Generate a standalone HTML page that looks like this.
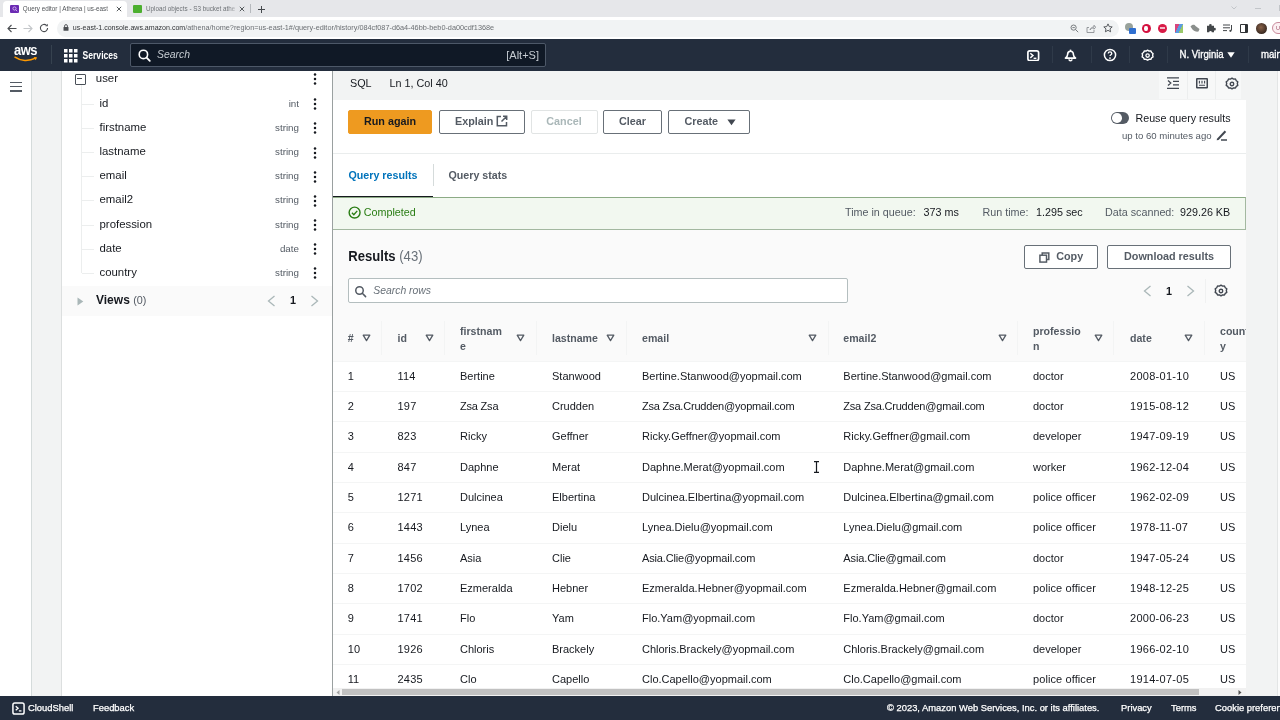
<!DOCTYPE html>
<html lang="en">
<head>
<meta charset="utf-8">
<title>Query editor | Athena | us-east-1</title>
<style>
*{box-sizing:border-box;margin:0;padding:0}
html,body{width:1280px;height:720px;overflow:hidden;background:#f2f3f3;font-family:"Liberation Sans",sans-serif;color:#16191f}
#root{position:relative;width:1280px;height:720px;overflow:hidden;will-change:transform}
#root div,#root span,#root svg,#root i{position:absolute;white-space:nowrap}
#root i{font-style:normal}
/* browser chrome */
#tabbar{left:0;top:0;width:1280px;height:17px;background:#e6e7ea}
#tab1{left:3px;top:0.500px;width:124px;height:16.500px;background:#fff;border-radius:4px 4px 0 0}
.tabtxt{font-size:6.300px;color:#6e7276;top:5px;line-height:8px}
#addr{left:0;top:17px;width:1280px;height:22px;background:#fff}
#url{left:57px;top:2.500px;width:1062px;height:17px;background:#f1f3f4;border-radius:8.500px}
#urltxt{left:15.800px;top:4.500px;font-size:7.310px;line-height:8px;color:#6b6f73}
/* aws nav */
#nav{left:0;top:39.400px;width:1280px;height:31.200px;background:#232d3d;z-index:5}
#search{left:130px;top:4px;width:416px;height:24px;background:#101926;border:1px solid #4d5868;border-radius:2px}
.navtxt{color:#fff;font-size:11px;line-height:14px}
/* left */
#leftstrip{left:0;top:70px;width:32px;height:626px;background:#fff;border-right:1px solid #d5dbdb}
#sidepanel{left:61px;top:70px;width:271px;border-left:1px solid #dcdfdf;height:626px;background:#fff}
#views{left:0;top:215.500px;width:270px;height:30px;background:#fafafa}
.col{font-size:11.4px;line-height:14px;color:#16191f;left:37.5px}
.typ{font-size:9.8px;line-height:12px;color:#545b64;right:33px}
.dots{left:250.900px}
.dots i{left:0;width:2.2px;height:2.2px;background:#16191f;border-radius:1.1px}
.tick{left:20px;width:11.5px;height:1px;background:#eceeee}
#vline{left:18.5px;top:15px;width:1px;height:188px;background:#eceeee}
.minus{left:12.800px;width:11px;height:11px;border:1.700px solid #4a5058;border-radius:1px}
.minus i{left:1.700px;top:3px;width:4.200px;height:1.600px;background:#4a5058}
/* main */
#main{left:332px;top:70px;width:914px;height:626px;background:#fff;border-left:1px solid #9aa0a0}
#edstat{left:0;top:0;width:913px;height:29.5px;background:#f2f3f3}
.btn{height:24px;top:40px;border:1px solid #687078;border-radius:2px;font-size:10.800px;font-weight:bold;color:#545b64;line-height:21px;text-align:center;background:#fff}
#results{left:0;top:159px;width:913px;height:467px;background:#fafafa;overflow:hidden}
.th{font-size:10.600px;font-weight:bold;color:#545b64;line-height:16px}
.td{font-size:11px;color:#16191f;line-height:14px;top:7px}
.row{left:0;width:913px;height:30.400px;background:#fff;border-top:1px solid #f4f5f5}
.cdiv{top:92px;width:1px;height:34px;background:#f3f4f4}
.g{color:#545b64}
/* footer */
#footer{left:0;top:696px;width:1280px;height:24px;background:#232d3d}
.ftxt{color:#fff;font-size:9.400px;line-height:12px;top:6px;-webkit-text-stroke:0.250px #fff}
.nsep{top:7px;width:1px;height:17px;background:#2f3a49}
.hb{left:10px;width:11.500px;height:1.600px;background:#545b64}
#rstrip{left:1276.500px;top:70px;width:4px;height:626px;background:#fbfbfb;border-left:1px solid #e3e5e5}

</style>
</head>
<body>
<div id="root">

<!-- BROWSER -->
<div id="tabbar">
  <div id="tab1"></div>
  <div style="left:10px;top:4.700px;width:8.500px;height:8.200px;background:#6b2bb3;border-radius:1px"></div>
  <svg style="left:11.500px;top:6px" width="6" height="6" viewBox="0 0 6 6"><circle cx="2.500" cy="2.500" r="1.600" fill="none" stroke="#d9b8f5" stroke-width=".9"/><path d="M3.700 3.700l1.500 1.500" stroke="#d9b8f5" stroke-width=".9"/></svg>
  <span class="tabtxt" style="left:22.800px;color:#505458">Query editor | Athena | us-east</span>
  <div style="left:106px;top:2px;width:9px;height:14px;background:linear-gradient(90deg,rgba(255,255,255,0),#fff)"></div>
  <svg style="left:116px;top:6px" width="6" height="6" viewBox="0 0 6 6"><path d="M.8.800l4.400 4.400M5.200.800L.8 5.200" stroke="#45494d" stroke-width=".9"/></svg>
  <div style="left:133px;top:4.700px;width:8.500px;height:8.200px;background:#4caf2f;border-radius:1px"></div>
  <span class="tabtxt" style="left:146px">Upload objects - S3 bucket athe</span>
  <div style="left:229px;top:2px;width:9px;height:14px;background:linear-gradient(90deg,rgba(230,231,234,0),#e6e7ea)"></div>
  <svg style="left:239px;top:6px" width="6" height="6" viewBox="0 0 6 6"><path d="M.8.800l4.400 4.400M5.200.800L.8 5.200" stroke="#45494d" stroke-width=".9"/></svg>
  <div style="left:250px;top:4px;width:1px;height:9px;background:#b6b9bd"></div>
  <svg style="left:258px;top:5.500px" width="7" height="7" viewBox="0 0 7 7"><path d="M3.500 0v7M0 3.500h7" stroke="#45494d" stroke-width="1"/></svg>
  <svg style="left:1230.500px;top:5.500px" width="6" height="4" viewBox="0 0 6 4"><path d="M.5.500L3 3 5.500.5" fill="none" stroke="#c2c5c9" stroke-width="1"/></svg>
  <div style="left:1254.500px;top:7.500px;width:6px;height:1px;background:#c2c5c9"></div>
  <div style="left:1278.500px;top:5px;width:6px;height:6px;border:1px solid #c2c5c9"></div>
</div>
<div id="addr">
  <svg style="left:6.500px;top:6.500px" width="10" height="9" viewBox="0 0 10 9" fill="none" stroke="#4a4d51" stroke-width="1.100"><path d="M9.500 4.500H1M4.500 1L1 4.500 4.500 8"/></svg>
  <svg style="left:23px;top:6.500px" width="10" height="9" viewBox="0 0 10 9" fill="none" stroke="#c4c7ca" stroke-width="1.100"><path d="M.5 4.500H9M5.500 1L9 4.500 5.500 8"/></svg>
  <svg style="left:39px;top:6px" width="10" height="10" viewBox="0 0 10 10" fill="none" stroke="#4a4d51" stroke-width="1.100"><path d="M8.600 5A3.600 3.600 0 1 1 7.500 2.400"/><path d="M8.800.800v2.400H6.400z" fill="#4a4d51" stroke="none"/></svg>
  <div id="url">
    <svg style="left:6px;top:4.500px" width="6" height="7" viewBox="0 0 6 7"><rect x=".5" y="3" width="5" height="3.800" rx=".5" fill="#4a4d51"/><path d="M1.600 3V2a1.400 1.400 0 0 1 2.800 0v1" fill="none" stroke="#4a4d51" stroke-width=".9"/></svg>
    <span id="urltxt"><i style="position:static;color:#303336;font-size:7.050px">us-east-1.console.aws.amazon.com</i>/athena/home?region=us-east-1#/query-editor/history/084cf087-d6a4-46bb-beb0-da00cdf1368e</span>
    <svg style="left:1013px;top:4px" width="9" height="9" viewBox="0 0 9 9" fill="none" stroke="#6b6f73" stroke-width=".9"><circle cx="3.600" cy="3.600" r="2.600"/><path d="M5.600 5.600l2.600 2.600M2.400 3.600h2.400"/></svg>
    <svg style="left:1029px;top:4px" width="10" height="9" viewBox="0 0 10 9" fill="none" stroke="#8c9094" stroke-width=".9"><path d="M3 3.500H1v5h7V6M4 6c.4-2 2-3 4-3V1.200L9.700 3.200 8 5.200V4C6 4 5 4.600 4 6z"/></svg>
    <svg style="left:1046px;top:3.500px" width="10" height="10" viewBox="0 0 10 10" fill="none" stroke="#4a4d51" stroke-width=".9"><path d="M5 .9l1.250 2.700 2.950.3-2.200 2 .6 2.900L5 7.300 2.400 8.800l.6-2.900-2.200-2 2.950-.3z" stroke-linejoin="round"/></svg>
  </div>
  <div style="left:1125px;top:6px;width:8px;height:8px;border-radius:50%;background:#9aa39c"></div>
  <div style="left:1129px;top:10.500px;width:6.500px;height:6.500px;background:#2f6fd0;border-radius:1px"></div>
  <div style="left:1141.500px;top:6.500px;width:9px;height:9px;border-radius:50%;background:#d4103f"></div>
  <div style="left:1144.200px;top:8.500px;width:3.600px;height:5px;border-radius:45%;background:#fff"></div>
  <div style="left:1158px;top:6.500px;width:9px;height:9px;border-radius:50%;background:#d81b47"></div>
  <div style="left:1160px;top:10px;width:5px;height:2px;background:#f4b8c6"></div>
  <div style="left:1174.500px;top:6.500px;width:8.500px;height:9px;background:linear-gradient(115deg,#d8467f 0 35%,#5b9be0 35% 65%,#9ac86a 65%)"></div>
  <svg style="left:1190px;top:7px" width="10" height="8" viewBox="0 0 10 8"><path d="M.5 2.500c1.500-2 4-2.500 5-.5l4 3-1 2.500c-2 .5-5-.5-6-2z" fill="#8b8f8c"/></svg>
  <svg style="left:1206px;top:6px" width="10" height="10" viewBox="0 0 10 10"><path d="M1 3.500h2.200a1.300 1.300 0 1 1 2.400 0H8v2.300a1.300 1.300 0 1 1 0 2.400V10H5.800a1.300 1.300 0 1 0-2.600 0H1z" transform="translate(0 -.8)" fill="#43474a"/></svg>
  <svg style="left:1222.500px;top:7px" width="10" height="9" viewBox="0 0 10 9" fill="none" stroke="#43474a" stroke-width="1"><path d="M0 1h7M0 3.800h7M0 6.600h4M8.500 1v5.500"/><circle cx="7.400" cy="6.800" r="1.100" fill="#43474a" stroke="none"/></svg>
  <div style="left:1240px;top:7px;width:8px;height:8.500px;border:1.200px solid #303336;border-right-width:3px;border-radius:1px"></div>
  <div style="left:1255.500px;top:5.500px;width:11px;height:11px;border-radius:50%;background:radial-gradient(circle at 45% 40%,#8a6248,#3a2a22 70%)"></div>
  <div style="left:1271.500px;top:5px;width:14px;height:12px;border-radius:6px;border:1px solid #c98b9c;background:#fbeff2"></div>
  <span style="left:1276px;top:8px;font-size:5.500px;line-height:6px;color:#a05068">U</span>
</div>

<!-- AWS NAV -->
<div id="nav">
  <span class="navtxt" style="left:14px;top:3.500px;font-size:13px;line-height:16px;font-weight:bold;letter-spacing:-0.500px;transform-origin:0 60%;transform:scaleY(1.150)">aws</span>
  <svg style="left:14px;top:17px" width="25" height="7" viewBox="0 0 25 7"><path d="M1 1.2C6.5 5.2 15 5.4 21.6 2.2" fill="none" stroke="#f90" stroke-width="1.5" stroke-linecap="round"/><path d="M19.6 1l3.4.2-1.3 3z" fill="#f90"/></svg>
  <div style="left:51px;top:6px;width:1px;height:19px;background:#36424f"></div>
  <svg style="left:63.5px;top:9.5px" width="14" height="14" viewBox="0 0 14 14" fill="#fff"><rect x="0" y="0" width="3.5" height="3.5"/><rect x="5" y="0" width="3.5" height="3.5"/><rect x="10" y="0" width="3.5" height="3.5"/><rect x="0" y="5" width="3.5" height="3.5"/><rect x="5" y="5" width="3.5" height="3.5"/><rect x="10" y="5" width="3.5" height="3.5"/><rect x="0" y="10" width="3.5" height="3.5"/><rect x="5" y="10" width="3.5" height="3.5"/><rect x="10" y="10" width="3.5" height="3.5"/></svg>
  <span class="navtxt" style="left:82.5px;top:9px;font-weight:bold;font-size:8.6px;line-height:14px;transform-origin:0 50%;transform:scaleY(1.2)">Services</span>
  <div id="search">
    <svg style="left:6px;top:4px" width="15" height="15" viewBox="0 0 15 15"><circle cx="6.4" cy="6.4" r="4.2" fill="none" stroke="#fff" stroke-width="1.6"/><path d="M9.6 9.6l3.2 3.2" stroke="#fff" stroke-width="1.8" stroke-linecap="round"/></svg>
    <span class="navtxt" style="left:26px;top:4px;color:#c6ccd2;font-style:italic;font-size:10.400px">Search</span>
    <span class="navtxt" style="right:6px;top:4px;color:#c6ccd2;font-size:11px">[Alt+S]</span>
  </div>
  <svg style="left:1027.200px;top:10.300px" width="12.500" height="11.500" viewBox="0 0 12.500 11.500"><rect x=".9" y=".9" width="10.700" height="9.700" rx="1.800" fill="none" stroke="#fff" stroke-width="1.700"/><path d="M3.300 3.300l2.700 2.300-2.700 2.300" fill="none" stroke="#fff" stroke-width="1.400"/><path d="M6.600 8.300h2.800" stroke="#fff" stroke-width="1.400"/></svg>
  <div class="nsep" style="left:1052px"></div>
  <svg style="left:1064.200px;top:9.500px" width="13" height="13" viewBox="0 0 13 13"><path d="M6.500 2.300c-2 0-2.900 1.500-2.900 3.300 0 1.600-.8 2.500-2.200 3.500h10.200c-1.400-1-2.200-1.900-2.200-3.500 0-1.800-.9-3.300-2.900-3.300z" fill="none" stroke="#fff" stroke-width="1.600" stroke-linejoin="round"/><path d="M6.500.600v1.400" stroke="#fff" stroke-width="1.500"/><path d="M5 10.300a1.500 1.500 0 0 0 3 0" fill="none" stroke="#fff" stroke-width="1.400"/></svg>
  <div class="nsep" style="left:1090.5px"></div>
  <svg style="left:1103.200px;top:8.600px" width="14" height="14" viewBox="0 0 15 15"><circle cx="7.500" cy="7.500" r="6" fill="none" stroke="#fff" stroke-width="1.600"/><path d="M5.600 6c0-1.200.9-1.900 1.900-1.900s1.900.7 1.900 1.700c0 1.400-1.900 1.400-1.900 2.900" fill="none" stroke="#fff" stroke-width="1.400"/><circle cx="7.500" cy="10.800" r=".95" fill="#fff"/></svg>
  <div class="nsep" style="left:1129px"></div>
  <svg style="left:1141.200px;top:9.600px" width="13.200" height="13.200" viewBox="0 0 15 15"><path d="M7.500 1.300l1.700 1 2-.1.900 1.800 1.600 1.100-.5 1.900.5 1.900-1.600 1.100-.9 1.800-2-.1-1.700 1-1.700-1-2 .1-.9-1.800L1.300 8.900l.5-1.900-.5-1.900 1.600-1.100.9-1.800 2 .1z" fill="none" stroke="#fff" stroke-width="1.600" stroke-linejoin="round"/><circle cx="7.500" cy="7.500" r="1.900" fill="none" stroke="#fff" stroke-width="1.500"/></svg>
  <div class="nsep" style="left:1166.500px"></div>
  <span class="navtxt" style="left:1179.500px;top:9px;font-size:9.650px;-webkit-text-stroke:0.300px #fff;transform-origin:0 50%;transform:scaleY(1.080)">N. Virginia</span>
  <svg style="left:1227px;top:13px" width="8" height="6" viewBox="0 0 8 6"><path d="M.3.300h7.400L4 5.700z" fill="#fff"/></svg>
  <div class="nsep" style="left:1248px"></div>
  <span class="navtxt" style="left:1261px;top:9px;font-size:9.650px;-webkit-text-stroke:0.300px #fff;transform-origin:0 50%;transform:scaleY(1.080)">main</span>
</div>

<!-- LEFT -->
<div id="leftstrip">
  <div class="hb" style="top:11.500px"></div><div class="hb" style="top:15.800px"></div><div class="hb" style="top:20.200px"></div>
</div>
<div id="sidepanel">
  <div id="views">
    <svg style="left:15px;top:11px" width="7" height="9" viewBox="0 0 7 9"><path d="M.5.600l5.800 3.900L.5 8.400z" fill="#aab7b8"/></svg>
    <span style="left:34px;top:7px;font-size:12px;font-weight:bold;line-height:15px;color:#16191f">Views <span style="position:static;font-weight:normal;color:#545b64;font-size:10.800px">(0)</span></span>
    <svg style="left:205px;top:9.500px" width="9" height="12" viewBox="0 0 9 12"><path d="M7.500 1L1.500 6l6 5" fill="none" stroke="#aab7b8" stroke-width="1.300"/></svg>
    <span style="left:228px;top:7.500px;font-size:10.800px;font-weight:bold;line-height:15px">1</span>
    <svg style="left:248px;top:9.500px" width="9" height="12" viewBox="0 0 9 12"><path d="M1.500 1l6 5-6 5" fill="none" stroke="#aab7b8" stroke-width="1.300"/></svg>
  </div>
  <div id="vline"></div>
  <div class="minus" style="top:3.6px"><i></i></div>
  <span class="col" style="left:33.8px;top:1.4px">user</span>
  <svg class="dots" style="top:3.4px" width="4" height="12" viewBox="0 0 4 12" fill="#16191f"><circle cx="2" cy="1.6" r="1.25"/><circle cx="2" cy="6" r="1.25"/><circle cx="2" cy="10.4" r="1.25"/></svg>
  <div class="tick" style="top:33.6px"></div>
  <span class="col" style="top:25.6px">id</span>
  <span class="typ" style="top:27.6px">int</span>
  <svg class="dots" style="top:28.1px" width="4" height="12" viewBox="0 0 4 12" fill="#16191f"><circle cx="2" cy="1.6" r="1.25"/><circle cx="2" cy="6" r="1.25"/><circle cx="2" cy="10.4" r="1.25"/></svg>
  <div class="tick" style="top:57.8px"></div>
  <span class="col" style="top:49.8px">firstname</span>
  <span class="typ" style="top:51.8px">string</span>
  <svg class="dots" style="top:52.3px" width="4" height="12" viewBox="0 0 4 12" fill="#16191f"><circle cx="2" cy="1.6" r="1.25"/><circle cx="2" cy="6" r="1.25"/><circle cx="2" cy="10.4" r="1.25"/></svg>
  <div class="tick" style="top:82.0px"></div>
  <span class="col" style="top:74.0px">lastname</span>
  <span class="typ" style="top:76.0px">string</span>
  <svg class="dots" style="top:76.5px" width="4" height="12" viewBox="0 0 4 12" fill="#16191f"><circle cx="2" cy="1.6" r="1.25"/><circle cx="2" cy="6" r="1.25"/><circle cx="2" cy="10.4" r="1.25"/></svg>
  <div class="tick" style="top:106.1px"></div>
  <span class="col" style="top:98.1px">email</span>
  <span class="typ" style="top:100.1px">string</span>
  <svg class="dots" style="top:100.6px" width="4" height="12" viewBox="0 0 4 12" fill="#16191f"><circle cx="2" cy="1.6" r="1.25"/><circle cx="2" cy="6" r="1.25"/><circle cx="2" cy="10.4" r="1.25"/></svg>
  <div class="tick" style="top:130.3px"></div>
  <span class="col" style="top:122.3px">email2</span>
  <span class="typ" style="top:124.3px">string</span>
  <svg class="dots" style="top:124.8px" width="4" height="12" viewBox="0 0 4 12" fill="#16191f"><circle cx="2" cy="1.6" r="1.25"/><circle cx="2" cy="6" r="1.25"/><circle cx="2" cy="10.4" r="1.25"/></svg>
  <div class="tick" style="top:154.5px"></div>
  <span class="col" style="top:146.5px">profession</span>
  <span class="typ" style="top:148.5px">string</span>
  <svg class="dots" style="top:149.0px" width="4" height="12" viewBox="0 0 4 12" fill="#16191f"><circle cx="2" cy="1.6" r="1.25"/><circle cx="2" cy="6" r="1.25"/><circle cx="2" cy="10.4" r="1.25"/></svg>
  <div class="tick" style="top:178.6px"></div>
  <span class="col" style="top:170.6px">date</span>
  <span class="typ" style="top:172.6px">date</span>
  <svg class="dots" style="top:173.1px" width="4" height="12" viewBox="0 0 4 12" fill="#16191f"><circle cx="2" cy="1.6" r="1.25"/><circle cx="2" cy="6" r="1.25"/><circle cx="2" cy="10.4" r="1.25"/></svg>
  <div class="tick" style="top:202.8px"></div>
  <span class="col" style="top:194.8px">country</span>
  <span class="typ" style="top:196.8px">string</span>
  <svg class="dots" style="top:197.3px" width="4" height="12" viewBox="0 0 4 12" fill="#16191f"><circle cx="2" cy="1.6" r="1.25"/><circle cx="2" cy="6" r="1.25"/><circle cx="2" cy="10.4" r="1.25"/></svg>
</div>

<div id="rstrip"></div>
<!-- MAIN -->
<div id="main">
  <div id="edstat">
    <span style="left:17px;top:7px;font-size:10.8px;line-height:13px;color:#16191f">SQL</span>
    <span style="left:56.5px;top:7px;font-size:10.8px;line-height:13px;color:#16191f">Ln 1, Col 40</span>
    <div style="left:825.500px;top:0;width:82px;height:29px;background:#f7f8f8"></div>
    <div style="left:853.5px;top:0;width:1px;height:29px;background:#eceeee"></div>
    <div style="left:882px;top:0;width:1px;height:29px;background:#eceeee"></div>
    <svg style="left:833.800px;top:7.400px" width="12.500" height="12.200" viewBox="0 0 12.500 12.200" fill="none" stroke="#414750" stroke-width="1.300"><path d="M0 .8h12.500M6 4.300h6.500M6 7.800h6.500M0 11.400h12.500M1 3.600L3.800 6.100 1 8.600"/></svg>
    <svg style="left:863.300px;top:8.200px" width="12" height="10.600" viewBox="0 0 12 10.600" fill="none" stroke="#414750"><rect x=".75" y=".75" width="10.500" height="9.100" rx=".3" stroke-width="1.500"/><path d="M3.400 2.800v2.600M6 2.800v2.600M8.600 2.800v2.600M3 7.300h6" stroke-width="1.100"/></svg>
    <svg style="left:891.500px;top:6.500px" width="14" height="14" viewBox="0 0 15 15"><path d="M7.500 1.300l1.700 1 2-.1.900 1.800 1.600 1.100-.5 1.900.5 1.900-1.600 1.100-.9 1.800-2-.1-1.700 1-1.700-1-2 .1-.9-1.800L1.300 8.900l.5-1.900-.5-1.900 1.600-1.100.9-1.800 2 .1z" fill="none" stroke="#414750" stroke-width="1.500" stroke-linejoin="round"/><circle cx="7.500" cy="7.500" r="1.900" fill="none" stroke="#414750" stroke-width="1.400"/></svg>
  </div>
  <div class="btn" style="left:15.0px;top:39.700px;width:84px;background:#ee9a20;border-color:#ee9a20;color:#16191f">Run again</div>
  <div class="btn" style="left:105.5px;top:39.700px;width:86px;text-align:left;padding-left:15.5px">Explain<svg style="left:56.500px;top:4.700px" width="12" height="12" viewBox="0 0 12 12" fill="none" stroke="#545b64" stroke-width="1.500"><path d="M5 1.500H1.300v9.200h9.200V7M7 1.300h3.700V5M10.500 1.500L5.500 6.500"/></svg></div>
  <div class="btn" style="left:197.5px;top:39.700px;width:67px;color:#aab7b8;border-color:#e1e4e4">Cancel</div>
  <div class="btn" style="left:270.0px;top:39.700px;width:59px">Clear</div>
  <div class="btn" style="left:335.0px;top:39.700px;width:82px;text-align:left;padding-left:15.500px">Create<svg style="left:57.500px;top:8px" width="9" height="7" viewBox="0 0 9 7"><path d="M.4.400h8.200L4.500 6.300z" fill="#414750"/></svg></div>
  <div style="left:0;top:83px;width:913px;height:1px;background:#eaeded"></div>
  <span style="left:15.5px;top:98px;font-size:10.7px;font-weight:bold;line-height:14px;color:#0073bb">Query results</span>
  <div style="left:99.5px;top:94px;width:1px;height:22px;background:#d5dbdb"></div>
  <span style="left:115.5px;top:98px;font-size:10.7px;font-weight:bold;line-height:14px;color:#545b64">Query stats</span>
  <div style="left:0;top:125.5px;width:100px;height:1.5px;background:#16191f"></div>
  <div id="done" style="left:0;top:127px;width:913px;height:33px;background:#f2f8f0;border:1px solid #a3b8a0;border-top-color:#8cab85;border-left:none;z-index:2">
    <svg style="left:14.800px;top:8.400px" width="13.200" height="13.200" viewBox="0 0 14 14" fill="none" stroke="#2a7d14" stroke-width="1.500"><circle cx="7" cy="7" r="5.800"/><path d="M4.200 7.200l2 2 3.600-4"/></svg>
    <span style="left:30.800px;top:7.200px;font-size:10.750px;line-height:14px;color:#2a7d14">Completed</span>
    <span class="g" style="left:512px;top:7px;font-size:10.750px;line-height:14px">Time in queue:</span>
    <span style="left:590.5px;top:7px;font-size:10.750px;line-height:14px">373 ms</span>
    <span class="g" style="left:649.5px;top:7px;font-size:10.750px;line-height:14px">Run time:</span>
    <span style="left:703px;top:7px;font-size:10.750px;line-height:14px">1.295 sec</span>
    <span class="g" style="left:772px;top:7px;font-size:10.750px;line-height:14px">Data scanned:</span>
    <span style="left:847px;top:7px;font-size:10.750px;line-height:14px">929.26 KB</span>
  </div>
  <div style="left:777.500px;top:42px;width:18.500px;height:12px;border-radius:6px;background:#545b64"></div>
  <div style="left:779px;top:43.200px;width:9.600px;height:9.600px;border-radius:50%;background:#fff"></div>
  <svg style="left:882.500px;top:58.500px" width="12" height="12" viewBox="0 0 12 12"><path d="M1 9.800L8.700 1.600l1.500 1.400L2.600 11 .7 11.300z" fill="#414750"/><path d="M5 11h6" stroke="#414750" stroke-width="1.500"/></svg>
  <span style="left:802.5px;top:41.700px;font-size:10.7px;line-height:13px;color:#16191f" id="reuse">Reuse query results</span>
  <span style="left:789px;top:59.600px;font-size:9.600px;line-height:12px;color:#545b64" id="upto">up to 60 minutes ago</span>
  <div id="results">
    <span style="left:15.300px;top:18.900px;font-size:13.100px;font-weight:bold;line-height:18px;color:#16191f;transform-origin:0 13.400px;transform:scaleY(1.090)">Results <span style="position:static;font-weight:normal;color:#687078">(43)</span></span>
    <div class="btn" style="left:691px;top:16px;width:74px;text-align:left;padding-left:31.200px">Copy<svg style="left:14.200px;top:5.500px" width="11" height="11" viewBox="0 0 12 12" fill="none" stroke="#545b64" stroke-width="1.600"><path d="M3.500 3.500V1h7.200v7.200H8.300"/><rect x="1" y="3.500" width="7.200" height="7.500"/></svg></div>
    <div class="btn" style="left:774px;top:16px;width:124px">Download results</div>
    <div style="left:15px;top:48.800px;width:500px;height:24.900px;background:#fff;border:1px solid #b4bebf;border-radius:2px">
      <svg style="left:4.800px;top:5.800px" width="14" height="14" viewBox="0 0 14 14" fill="none" stroke="#545b64" stroke-width="1.500"><circle cx="5.500" cy="5.500" r="3.750"/><path d="M8.300 8.300l3.300 3.300" stroke-linecap="round"/></svg>
      <span style="left:24.300px;top:5px;font-size:10.400px;font-style:italic;line-height:13px;color:#687078">Search rows</span>
    </div>
    <svg style="left:810px;top:56px" width="9" height="12" viewBox="0 0 9 12"><path d="M7.500 1L1.500 6l6 5" fill="none" stroke="#aab7b8" stroke-width="1.300"/></svg>
    <span style="left:833px;top:55px;font-size:10.8px;font-weight:bold;line-height:14px;color:#16191f">1</span>
    <svg style="left:852.500px;top:56px" width="9" height="12" viewBox="0 0 9 12"><path d="M1.500 1l6 5-6 5" fill="none" stroke="#aab7b8" stroke-width="1.300"/></svg>
    <div style="left:871.500px;top:50px;width:1px;height:24px;background:#f0f1f1"></div>
    <svg style="left:880.500px;top:55px" width="14" height="14" viewBox="0 0 15 15"><path d="M7.500 1.300l1.700 1 2-.1.900 1.800 1.600 1.100-.5 1.900.5 1.900-1.600 1.100-.9 1.800-2-.1-1.700 1-1.700-1-2 .1-.9-1.800L1.300 8.900l.5-1.900-.5-1.900 1.600-1.100.9-1.800 2 .1z" fill="none" stroke="#414750" stroke-width="1.500" stroke-linejoin="round"/><circle cx="7.500" cy="7.500" r="1.900" fill="none" stroke="#414750" stroke-width="1.400"/></svg>
  <span class="th" style="left:14.8px;top:101.2px">#</span>
  <span class="th" style="left:64.5px;top:101.2px">id</span>
  <span class="th" style="left:127.0px;top:93.5px">firstnam</span><span class="th" style="left:127.0px;top:109.2px">e</span>
  <span class="th" style="left:219.0px;top:101.2px">lastname</span>
  <span class="th" style="left:309.0px;top:101.2px">email</span>
  <span class="th" style="left:510.3px;top:101.2px">email2</span>
  <span class="th" style="left:700.0px;top:93.5px">professio</span><span class="th" style="left:700.0px;top:109.2px">n</span>
  <span class="th" style="left:797.0px;top:101.2px">date</span>
  <span class="th" style="left:887.0px;top:93.5px">count</span><span class="th" style="left:887.0px;top:109.2px">y</span>
  <svg class="sort" style="left:29.0px;top:105.0px" width="9" height="8" viewBox="0 0 9 8"><path d="M1.2 1.2h6.6L4.5 6.6z" fill="none" stroke="#545b64" stroke-width="1.3" stroke-linejoin="round"/></svg>
  <svg class="sort" style="left:91.5px;top:105.0px" width="9" height="8" viewBox="0 0 9 8"><path d="M1.2 1.2h6.6L4.5 6.6z" fill="none" stroke="#545b64" stroke-width="1.3" stroke-linejoin="round"/></svg>
  <svg class="sort" style="left:183.3px;top:105.0px" width="9" height="8" viewBox="0 0 9 8"><path d="M1.2 1.2h6.6L4.5 6.6z" fill="none" stroke="#545b64" stroke-width="1.3" stroke-linejoin="round"/></svg>
  <svg class="sort" style="left:273.3px;top:105.0px" width="9" height="8" viewBox="0 0 9 8"><path d="M1.2 1.2h6.6L4.5 6.6z" fill="none" stroke="#545b64" stroke-width="1.3" stroke-linejoin="round"/></svg>
  <svg class="sort" style="left:475.0px;top:105.0px" width="9" height="8" viewBox="0 0 9 8"><path d="M1.2 1.2h6.6L4.5 6.6z" fill="none" stroke="#545b64" stroke-width="1.3" stroke-linejoin="round"/></svg>
  <svg class="sort" style="left:665.0px;top:105.0px" width="9" height="8" viewBox="0 0 9 8"><path d="M1.2 1.2h6.6L4.5 6.6z" fill="none" stroke="#545b64" stroke-width="1.3" stroke-linejoin="round"/></svg>
  <svg class="sort" style="left:760.7px;top:105.0px" width="9" height="8" viewBox="0 0 9 8"><path d="M1.2 1.2h6.6L4.5 6.6z" fill="none" stroke="#545b64" stroke-width="1.3" stroke-linejoin="round"/></svg>
  <svg class="sort" style="left:851.3px;top:105.0px" width="9" height="8" viewBox="0 0 9 8"><path d="M1.2 1.2h6.6L4.5 6.6z" fill="none" stroke="#545b64" stroke-width="1.3" stroke-linejoin="round"/></svg>
  <div class="cdiv" style="left:47.8px"></div>
  <div class="cdiv" style="left:111.0px"></div>
  <div class="cdiv" style="left:202.8px"></div>
  <div class="cdiv" style="left:292.8px"></div>
  <div class="cdiv" style="left:495.0px"></div>
  <div class="cdiv" style="left:684.0px"></div>
  <div class="cdiv" style="left:780.0px"></div>
  <div class="cdiv" style="left:870.8px"></div>
  <div class="row" style="top:131.60px"><span class="td" style="left:14.8px">1</span><span class="td" style="left:64.5px;letter-spacing:0.2px">114</span><span class="td" style="left:127.0px">Bertine</span><span class="td" style="left:219.0px">Stanwood</span><span class="td" style="left:309.0px">Bertine.Stanwood@yopmail.com</span><span class="td" style="left:510.3px">Bertine.Stanwood@gmail.com</span><span class="td" style="left:700.0px">doctor</span><span class="td" style="left:797.0px;letter-spacing:0.28px">2008-01-10</span><span class="td" style="left:887.0px">US</span></div>
  <div class="row" style="top:161.96px"><span class="td" style="left:14.8px">2</span><span class="td" style="left:64.5px;letter-spacing:0.2px">197</span><span class="td" style="left:127.0px;letter-spacing:-0.2px">Zsa Zsa</span><span class="td" style="left:219.0px">Crudden</span><span class="td" style="left:309.0px;letter-spacing:-0.2px">Zsa Zsa.Crudden@yopmail.com</span><span class="td" style="left:510.3px;letter-spacing:-0.2px">Zsa Zsa.Crudden@gmail.com</span><span class="td" style="left:700.0px">doctor</span><span class="td" style="left:797.0px;letter-spacing:0.28px">1915-08-12</span><span class="td" style="left:887.0px">US</span></div>
  <div class="row" style="top:192.32px"><span class="td" style="left:14.8px">3</span><span class="td" style="left:64.5px;letter-spacing:0.2px">823</span><span class="td" style="left:127.0px">Ricky</span><span class="td" style="left:219.0px">Geffner</span><span class="td" style="left:309.0px">Ricky.Geffner@yopmail.com</span><span class="td" style="left:510.3px">Ricky.Geffner@gmail.com</span><span class="td" style="left:700.0px">developer</span><span class="td" style="left:797.0px;letter-spacing:0.28px">1947-09-19</span><span class="td" style="left:887.0px">US</span></div>
  <div class="row" style="top:222.68px"><span class="td" style="left:14.8px">4</span><span class="td" style="left:64.5px;letter-spacing:0.2px">847</span><span class="td" style="left:127.0px">Daphne</span><span class="td" style="left:219.0px">Merat</span><span class="td" style="left:309.0px">Daphne.Merat@yopmail.com</span><span class="td" style="left:510.3px">Daphne.Merat@gmail.com</span><span class="td" style="left:700.0px">worker</span><span class="td" style="left:797.0px;letter-spacing:0.28px">1962-12-04</span><span class="td" style="left:887.0px">US</span></div>
  <div class="row" style="top:253.04px"><span class="td" style="left:14.8px">5</span><span class="td" style="left:64.5px;letter-spacing:0.2px">1271</span><span class="td" style="left:127.0px">Dulcinea</span><span class="td" style="left:219.0px">Elbertina</span><span class="td" style="left:309.0px">Dulcinea.Elbertina@yopmail.com</span><span class="td" style="left:510.3px">Dulcinea.Elbertina@gmail.com</span><span class="td" style="left:700.0px;letter-spacing:0.1px">police officer</span><span class="td" style="left:797.0px;letter-spacing:0.28px">1962-02-09</span><span class="td" style="left:887.0px">US</span></div>
  <div class="row" style="top:283.40px"><span class="td" style="left:14.8px">6</span><span class="td" style="left:64.5px;letter-spacing:0.2px">1443</span><span class="td" style="left:127.0px">Lynea</span><span class="td" style="left:219.0px">Dielu</span><span class="td" style="left:309.0px">Lynea.Dielu@yopmail.com</span><span class="td" style="left:510.3px">Lynea.Dielu@gmail.com</span><span class="td" style="left:700.0px;letter-spacing:0.1px">police officer</span><span class="td" style="left:797.0px;letter-spacing:0.28px">1978-11-07</span><span class="td" style="left:887.0px">US</span></div>
  <div class="row" style="top:313.76px"><span class="td" style="left:14.8px">7</span><span class="td" style="left:64.5px;letter-spacing:0.2px">1456</span><span class="td" style="left:127.0px">Asia</span><span class="td" style="left:219.0px">Clie</span><span class="td" style="left:309.0px;letter-spacing:-0.15px">Asia.Clie@yopmail.com</span><span class="td" style="left:510.3px;letter-spacing:-0.12px">Asia.Clie@gmail.com</span><span class="td" style="left:700.0px">doctor</span><span class="td" style="left:797.0px;letter-spacing:0.28px">1947-05-24</span><span class="td" style="left:887.0px">US</span></div>
  <div class="row" style="top:344.12px"><span class="td" style="left:14.8px">8</span><span class="td" style="left:64.5px;letter-spacing:0.2px">1702</span><span class="td" style="left:127.0px">Ezmeralda</span><span class="td" style="left:219.0px">Hebner</span><span class="td" style="left:309.0px">Ezmeralda.Hebner@yopmail.com</span><span class="td" style="left:510.3px">Ezmeralda.Hebner@gmail.com</span><span class="td" style="left:700.0px;letter-spacing:0.1px">police officer</span><span class="td" style="left:797.0px;letter-spacing:0.28px">1948-12-25</span><span class="td" style="left:887.0px">US</span></div>
  <div class="row" style="top:374.48px"><span class="td" style="left:14.8px">9</span><span class="td" style="left:64.5px;letter-spacing:0.2px">1741</span><span class="td" style="left:127.0px">Flo</span><span class="td" style="left:219.0px">Yam</span><span class="td" style="left:309.0px">Flo.Yam@yopmail.com</span><span class="td" style="left:510.3px">Flo.Yam@gmail.com</span><span class="td" style="left:700.0px">doctor</span><span class="td" style="left:797.0px;letter-spacing:0.28px">2000-06-23</span><span class="td" style="left:887.0px">US</span></div>
  <div class="row" style="top:404.84px"><span class="td" style="left:14.8px">10</span><span class="td" style="left:64.5px;letter-spacing:0.2px">1926</span><span class="td" style="left:127.0px">Chloris</span><span class="td" style="left:219.0px">Brackely</span><span class="td" style="left:309.0px">Chloris.Brackely@yopmail.com</span><span class="td" style="left:510.3px">Chloris.Brackely@gmail.com</span><span class="td" style="left:700.0px">developer</span><span class="td" style="left:797.0px;letter-spacing:0.28px">1966-02-10</span><span class="td" style="left:887.0px">US</span></div>
  <div class="row" style="top:435.20px"><span class="td" style="left:14.8px">11</span><span class="td" style="left:64.5px;letter-spacing:0.2px">2435</span><span class="td" style="left:127.0px">Clo</span><span class="td" style="left:219.0px">Capello</span><span class="td" style="left:309.0px">Clo.Capello@yopmail.com</span><span class="td" style="left:510.3px">Clo.Capello@gmail.com</span><span class="td" style="left:700.0px;letter-spacing:0.1px">police officer</span><span class="td" style="left:797.0px;letter-spacing:0.28px">1914-07-05</span><span class="td" style="left:887.0px">US</span></div>
    <div style="left:0;top:458.500px;width:913px;height:8.500px;background:#f1f1f1"></div>
    <div style="left:8.500px;top:459.500px;width:857px;height:6.800px;background:#c1c1c1"></div>
    <svg style="left:3px;top:460.500px" width="4" height="5" viewBox="0 0 4 5"><path d="M3.500 0L.5 2.500l3 2.500z" fill="#a3a3a3"/></svg>
    <svg style="left:905px;top:460.500px" width="4" height="5" viewBox="0 0 4 5"><path d="M.5 0l3 2.500-3 2.500z" fill="#505050"/></svg>
    <svg style="left:480px;top:231.500px" width="7" height="12" viewBox="0 0 7 12" fill="none" stroke="#16191f" stroke-width="1.200"><path d="M1 .600h2l.5.500.5-.5h2M3.500 1v10M1 11.400h2l.5-.5.5.5h2"/></svg>
  </div>
</div>

<!-- FOOTER -->
<div id="footer">
  <svg style="left:11.500px;top:5.800px" width="13" height="13" viewBox="0 0 14 14"><rect x="1" y="1" width="12" height="12" rx="2" fill="none" stroke="#fff" stroke-width="1.600"/><path d="M4 4.600l2.600 2.200L4 9" fill="none" stroke="#fff" stroke-width="1.400"/><path d="M7.400 9.600h2.800" stroke="#fff" stroke-width="1.400"/></svg>
  <span class="ftxt" style="left:28px">CloudShell</span>
  <span class="ftxt" style="left:93px">Feedback</span>
  <span class="ftxt" style="left:887px">© 2023, Amazon Web Services, Inc. or its affiliates.</span>
  <span class="ftxt" style="left:1121px">Privacy</span>
  <span class="ftxt" style="left:1171px">Terms</span>
  <span class="ftxt" style="left:1215px">Cookie preferences</span>
</div>

</div>
</body>
</html>
